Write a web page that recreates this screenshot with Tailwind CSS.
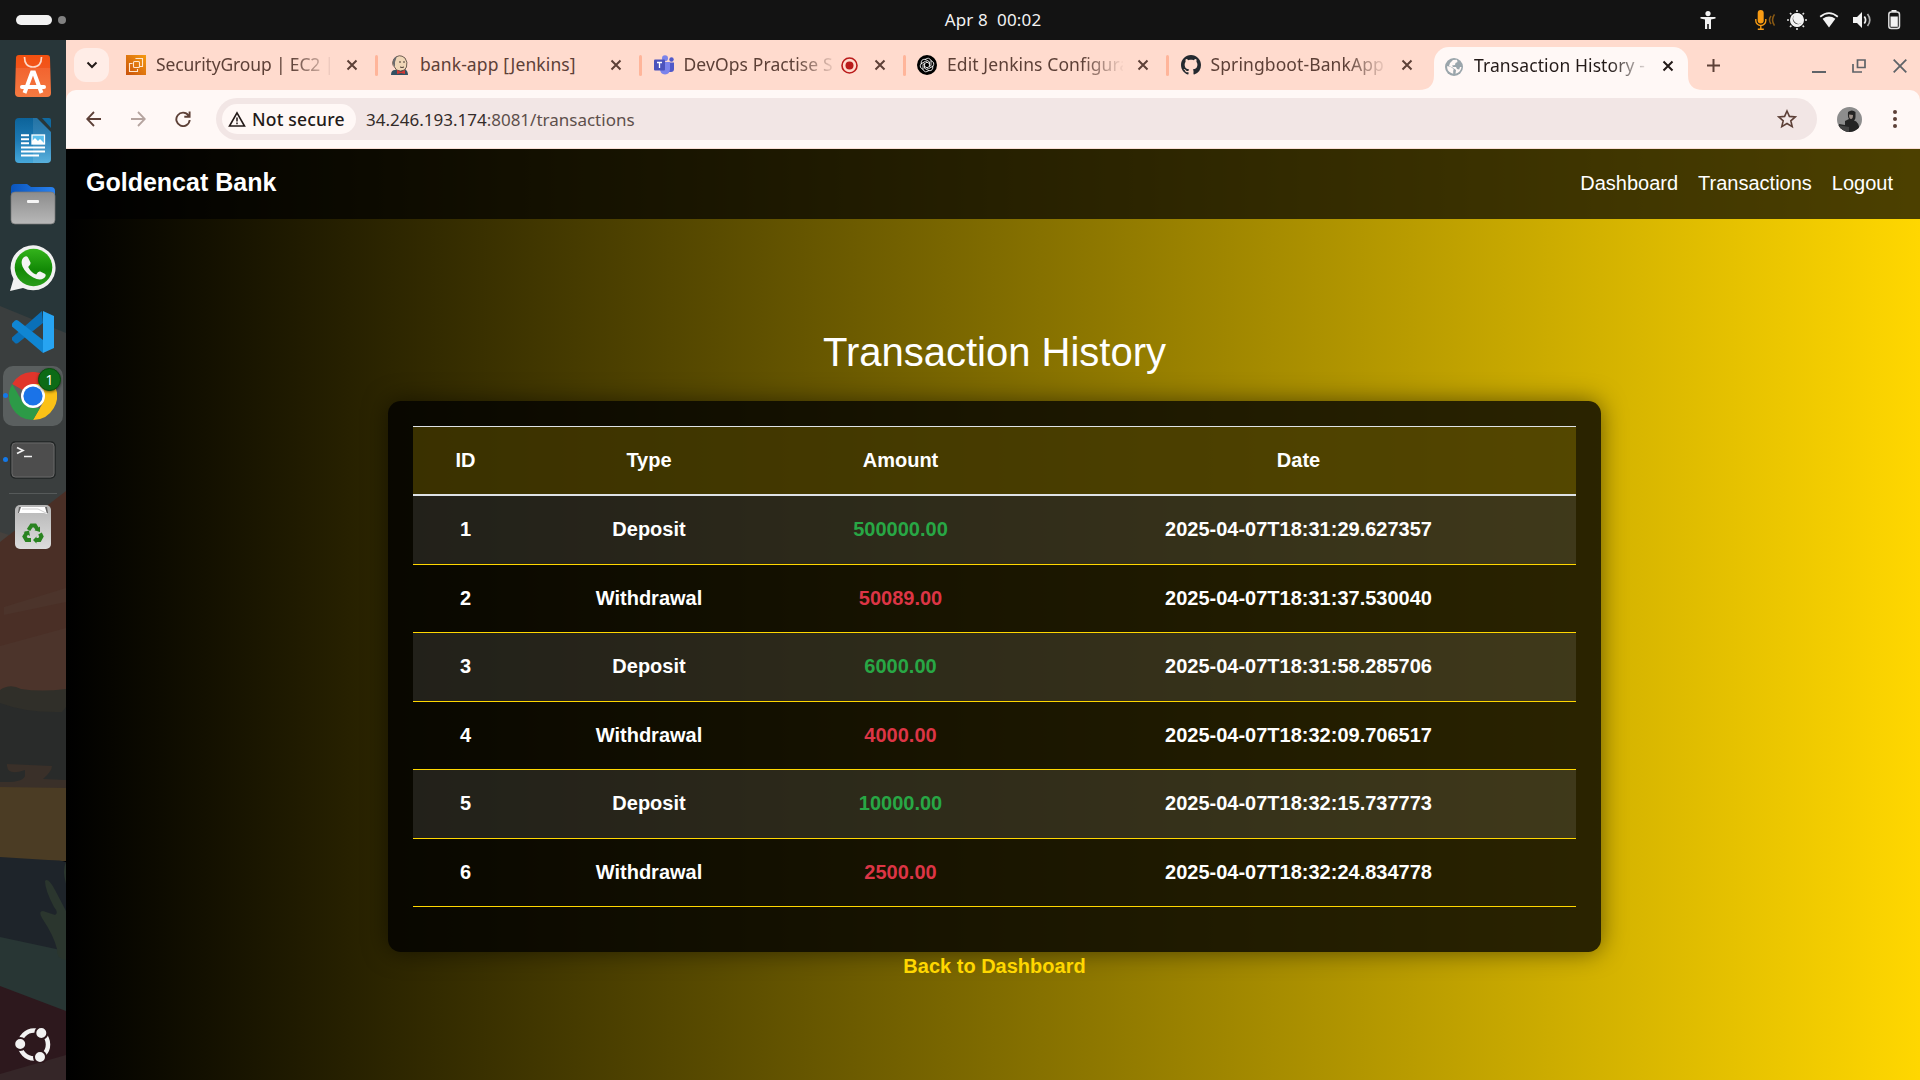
<!DOCTYPE html>
<html lang="en">
<head>
<meta charset="utf-8">
<title>Transaction History - Goldencat Bank</title>
<script src="https://cdn.jsdelivr.net/npm/@tailwindcss/browser@4"></script>
</head>
<body class="w-[1920px] h-[1080px] overflow-hidden flex flex-col bg-black font-['Noto_Sans',sans-serif]">

<!-- System top bar -->
<header class="h-10 shrink-0 bg-[#131313] grid grid-cols-[1fr_auto_1fr] items-center text-[#f2f2f2]">
  <div class="flex items-center gap-1.5 pl-4">
    <span class="w-9 h-2.5 rounded-full bg-[#f2f2f2]"></span>
    <span class="size-2 rounded-full bg-[#828282]"></span>
  </div>
  <div class="text-[17px] tracking-[0.15px] leading-10 whitespace-pre translate-x-[33px] -mt-px">Apr 8  00:02</div>
  <div class="flex items-center justify-end pr-[18px]">
    <svg class="w-4 h-[18px] mr-[39px]" viewBox="0 0 16 18" fill="#f2f2f2"><circle cx="8" cy="2.6" r="2.6"/><path d="M.5 6h15v1.6L11 8.6V18H8.8v-5H7.2v5H5V8.600L.5 7.600z"/></svg>
    <svg class="w-5 h-5 mr-3" viewBox="0 0 20 20" fill="none"><rect x="2.700" y="0" width="6" height="13.500" rx="3" fill="#f89b13"/><path d="M.8 9v1.500a5 5 0 0 0 10 0V9M5.800 15.500V19M2.800 19.300h6" stroke="#f89b13" stroke-width="1.400"/><path d="M16 6q-3 4 0 8M19.500 4.500q-4 5.500 0 11" stroke="#8a5a14" stroke-width="1.500"/></svg>
    <svg class="w-5 h-5 mr-3" viewBox="0 0 20 20"><circle cx="10" cy="10" r="6.700" fill="#f2f2f2"/><path d="M8.500 5.200a4.900 4.900 0 0 0 6.300 6.500" fill="none" stroke="#131313" stroke-width="1.300" transform="rotate(180 10 10) translate(-1 -1)" opacity="0"/><path d="M7.200 5a5.500 5.500 0 1 0 8 7.600A5.600 5.600 0 0 1 7.200 5z" fill="#131313" opacity=".85"/><path d="M10 0v2M10 18v2M0 10h2M18 10h2M3 3l1.400 1.400M15.600 15.600L17 17M17 3l-1.400 1.400M4.400 15.600L3 17" stroke="#ddd" stroke-width="1.600"/><circle cx="10" cy="10" r="6.300" fill="none" stroke="#f2f2f2" stroke-width="1.200"/></svg>
    <svg class="w-5 h-4 mr-[13px]" viewBox="0 0 20 16"><path d="M1.200 4.700Q10-2.500 18.800 4.700" fill="none" stroke="#f2f2f2" stroke-width="1.800"/><path d="M3.600 6.800q6.400-4.600 12.800 0L10 15.500z" fill="#f2f2f2"/></svg>
    <svg class="w-5 h-[18px] mr-[14px]" viewBox="0 0 20 18"><path d="M1 6h4l5-5v16l-5-5H1z" fill="#f2f2f2"/><path d="M12.300 5.500q2.600 3.500 0 7" fill="none" stroke="#f2f2f2" stroke-width="1.700"/><path d="M15.500 3q4.600 6 0 12" fill="none" stroke="#aaa" stroke-width="1.700"/></svg>
    <svg class="w-4 h-5" viewBox="0 0 16 20"><path d="M5.500 0h5v2h-5z" fill="#f2f2f2"/><rect x="2.800" y="2" width="10.700" height="16.500" rx="2.500" fill="none" stroke="#ddd" stroke-width="1.500"/><path d="M4.500 6.500h7.300v10.300H4.500z" fill="#f2f2f2"/></svg>
  </div>
</header>

<div class="flex flex-1 min-h-0">

<!-- Dock -->
<aside class="relative w-[66px] shrink-0 flex flex-col items-center pt-1 pb-[13px]">
  <svg class="absolute inset-0 w-[66px] h-[1040px]" viewBox="0 40 66 1040" preserveAspectRatio="none">
    <path fill="#283639" d="M0 40h66v300H0z"/>
    <path fill="#3a3e3e" d="M0 306l66 27v215H0z"/>
    <path fill="#46413d" d="M0 532l9 3-9 8z"/>
    <path fill="#4a2f26" d="M66 491v250H0V542z"/>
    <path fill="#4c342b" d="M4 607l62-19v14L4 615zM0 646l66-18v70H0z"/>
    <path fill="#302f29" d="M0 690q10-7 21-1 20 3 45 0v40H0z"/>
    <path fill="#292b2a" d="M0 703q26 10 62 9l4-5v85H0z"/>
    <path fill="#3a3029" d="M7 764l45 2q0 5-9 13l23 1v10H0v-8q25 1 25-7v-5q-17 6-18-4z"/>
    <path fill="#4b3c24" d="M0 787l66 1v73H0z"/>
    <path fill="#1e242a" d="M0 857l48 3q14 0 18 2v100H0z"/>
    <path fill="#283634" d="M0 937l56 12 10 3v65H0z"/>
    <path fill="#2b362e" d="M45 881q3-4 10 9l11 21v49q-10-1-9-11-3-13-15-31-4-7 1-7l12 4q4-2-1-8-9-17-9-26zM66 862q-4 8 0 22z"/>
    <path fill="#2d181d" d="M0 986l66 25v69H0z"/>
    <path fill="#352628" d="M0 1074l66-19v25H0z"/>
  </svg>
  <div class="relative flex flex-col items-center w-full flex-1">
    <!-- App Center -->
    <div class="h-16 flex items-center"><svg class="w-9 h-[42px]" viewBox="0 0 36 42"><defs><linearGradient id="ac" x1="0" y1="0" x2="0" y2="1"><stop offset="0" stop-color="#f2500f"/><stop offset=".3" stop-color="#f2551c"/><stop offset=".31" stop-color="#f26430"/><stop offset="1" stop-color="#f57a41"/></linearGradient></defs><path fill="url(#ac)" d="M4 0h28q3 0 3 3l1 35q0 4-4 4H4q-4 0-4-4L1 3q0-3 3-3z"/><path d="M9.500 2q0 10 8.500 10t8.500-10" fill="none" stroke="#fdd9c8" stroke-width="1.700"/><path d="M9.500 38L17 17.500h2L26.500 38" fill="none" stroke="#fff" stroke-width="4"/><path d="M7 32h22" stroke="#fff" stroke-width="4" stroke-linecap="round"/></svg></div>
    <!-- Writer -->
    <div class="h-16 flex items-center"><svg class="w-9 h-[45px]" viewBox="0 0 36 45"><defs><linearGradient id="wr" x1="0" y1="0" x2="0" y2="1"><stop offset="0" stop-color="#0c639a"/><stop offset=".5" stop-color="#1d7ab4"/><stop offset="1" stop-color="#46a8da"/></linearGradient></defs><path fill="url(#wr)" d="M4 0h18l14 14v27q0 4-4 4H4q-4 0-4-4V4q0-4 4-4z"/><path fill="#fff" fill-opacity=".1" d="M18 0h4l14 14v27q0 4-4 4H18z"/><path fill="#11699f" d="M27 0h7q2 0 2 2v8z"/><path d="M6 17.300h8M6 21.300h8M6 25.300h8M6 29.500h24M6 33.500h24M6 37.500h18" stroke="#fff" stroke-width="1.900"/><rect x="17" y="17" width="12.500" height="9" fill="#5cc0ee" stroke="#fff" stroke-width="1.300"/><path fill="#fff" d="M17 26v-3l3-3 3 3 2-2 4 4v1z"/></svg></div>
    <!-- Files -->
    <div class="h-16 flex items-center"><svg class="w-[46px] h-[42px]" viewBox="0 0 46 42"><defs><linearGradient id="fl" x1="0" y1="0" x2="0" y2="1"><stop offset="0" stop-color="#8c8c8c"/><stop offset="1" stop-color="#b8b8b8"/></linearGradient><linearGradient id="fb"><stop offset="0" stop-color="#0a55bd"/><stop offset="1" stop-color="#2a82ee"/></linearGradient></defs><path fill="url(#fb)" d="M5 1h12l4 3h20q4 0 4 4v12H1V5q0-4 4-4z"/><rect x="1" y="9" width="44" height="32" rx="4" fill="url(#fl)" stroke="#777" stroke-width=".7"/><rect x="17" y="17" width="12" height="3" rx="1" fill="#f5f5f5"/></svg></div>
    <!-- WhatsApp -->
    <div class="h-16 flex items-center"><svg class="w-[46px] h-[46px]" viewBox="0 0 46 46"><defs><linearGradient id="wa" x1="0" y1="0" x2="0" y2="1"><stop offset="0" stop-color="#34b31c"/><stop offset=".55" stop-color="#138a06"/><stop offset="1" stop-color="#2a9c1b"/></linearGradient></defs><path fill="#f1f1f1" d="M0 46l3.500-12A22.500 22.500 0 1 1 13 43z"/><circle cx="23.500" cy="22.500" r="18.800" fill="url(#wa)"/><path fill="#f4f4f4" d="M13 13q3-3 5-.5l2.500 5q.5 1.500-2.300 4.500 3 5.800 8 7.500 2-3.500 4-3l5 2.500q1.500 2-1.500 4.300-4 2.800-10.500-.8-7.500-4-10.700-11-2-5 .5-8.500z"/></svg></div>
    <!-- VS Code -->
    <div class="h-16 flex items-center"><svg class="w-[42px] h-[42px]" viewBox="0 0 42 42"><path fill="#0a70b8" d="M0 26.500L30 0l1 12L6 32q-2 1-3 0l-3-3z"/><path fill="#1086d3" d="M0 15.500v-3l3-3q1.500-1 3 0L31 29v13z"/><path fill="#27a4f2" d="M31 0l11 5v32l-11 5z"/></svg></div>
    <!-- Chrome -->
    <div class="h-16 w-full flex items-center justify-center relative">
      <span class="absolute left-[3px] top-0.5 size-[60px] rounded-[10px] bg-[#5a5f5f]"></span>
      <svg class="relative w-12 h-12" viewBox="0 0 48 48"><path fill="#e0352b" d="M24 24L3.200 12A24 24 0 0 1 44.800 12z"/><path fill="#fbc116" d="M24 12h20.800A24 24 0 0 1 24 48l10.400-18z"/><path fill="#2c9a47" d="M3.200 12l10.400 18L24 36h7L24 48A24 24 0 0 1 3.200 12z"/><circle cx="24" cy="24" r="12" fill="#fff"/><circle cx="24" cy="24" r="9.600" fill="#1a73e8"/></svg>
      <span class="absolute left-[38px] top-[4px] size-[23px] rounded-full bg-[#0c6b16] border border-[#084d0e] text-white text-[14px] leading-[22px] text-center shadow-[0_1px_3px_rgba(0,0,0,0.5)]">1</span>
      <span class="absolute left-[3px] top-[29px] size-[5px] rounded-full bg-[#1379e8]"></span>
    </div>
    <!-- Terminal -->
    <div class="h-16 w-full flex items-center justify-center relative">
      <svg class="w-[46px] h-[38px]" viewBox="0 0 46 38"><rect x="1" y="1" width="44" height="36" rx="4" fill="#4d4d4d" stroke="#202424" stroke-width="1.500"/><rect x="2" y="2" width="42" height="34" rx="3.500" fill="none" stroke="#686868"/><path d="M7 6.500l6 3-6 3M14 15.500h8" fill="none" stroke="#f2f2f2" stroke-width="1.700"/></svg>
      <span class="absolute left-[3px] top-[29px] size-[5px] rounded-full bg-[#1379e8]"></span>
    </div>
    <div class="w-12 h-px bg-[#565a5a] mt-px"></div>
    <!-- Trash -->
    <div class="h-16 flex items-center"><svg class="w-[38px] h-[46px] mt-0.5" viewBox="0 0 38 46"><defs><linearGradient id="tr" x1="0" y1="0" x2="0" y2="1"><stop offset="0" stop-color="#b5b5b5"/><stop offset="1" stop-color="#dcdcdc"/></linearGradient></defs><rect x="1" y="1" width="36" height="44" rx="5" fill="url(#tr)"/><path fill="#666" d="M5 3h28l1 6H4z"/><path fill="#fff" d="M7 3h24l2 7-3-1H5z"/><path d="M8 5h16l8 4" stroke="#bbb" fill="none" stroke-width=".7"/><g fill="none" stroke="#298320" stroke-width="4"><path d="M14.500 26l3-4.500h3.500l2.500 4"/><path d="M26 29.500l1.500 3-2 3.500h-4"/><path d="M17 36h-4.500l-2-3.500 2.500-4"/></g><path fill="#298320" d="M26 22.500v5.500l-5.500-1.800zM22.500 32.500v7l-3.500-3.500zM9.500 28l5.500-1.500 1 5.500z"/></svg></div>
    <!-- Ubuntu -->
    <div class="mt-auto mb-1"><svg class="w-9 h-9" viewBox="0 0 36 36"><circle cx="19" cy="17.500" r="14" fill="none" stroke="#f2f2f2" stroke-width="4.500"/><g fill="#f2f2f2" stroke="#2d181d" stroke-width="2"><circle cx="5.200" cy="17" r="6"/><circle cx="26.300" cy="6" r="6"/><circle cx="25" cy="30" r="6"/></g></svg></div>
  </div>
</aside>

<!-- Browser window -->
<section class="flex-1 min-w-0 flex flex-col">

  <!-- Tab strip -->
  <div class="h-[50px] shrink-0 bg-[#ffdbce] flex items-center text-[17.500px] tracking-[0.1px] text-[#5d4037]">
    <button class="ml-2 -mt-px w-[35px] h-[34px] rounded-xl bg-[#ffede7] flex items-center justify-center"><svg class="w-3 h-3" viewBox="0 0 12 12"><path d="M1.500 3.500L6 8l4.500-4.500" fill="none" stroke="#231a18" stroke-width="2"/></svg></button>

    <div class="ml-[3px] w-[264px] shrink-0 h-full flex items-center pl-[14px] [&>*]:shrink-0">
      <svg class="size-5" viewBox="0 0 20 20"><defs><linearGradient id="ec" x1="0" y1="1" x2="1" y2="0"><stop offset="0" stop-color="#c9520c"/><stop offset="1" stop-color="#f59b12"/></linearGradient></defs><path fill="url(#ec)" d="M0 0h20v20H0z"/><g fill="none" stroke="#ffe6cf" stroke-width="1.100"><rect x="7.500" y="6.500" width="6" height="6" rx="1"/><path d="M10 4V3.500h6.500v8H14M6.500 8.500h-3v8h8V14"/></g></svg>
      <span class="ml-2.5 -mt-0.5 w-[185px] tracking-[-0.15px] whitespace-nowrap overflow-hidden [mask-image:linear-gradient(to_right,#000_135px,transparent_178px)]">SecurityGroup | EC2 |</span>
      <svg class="ml-[5px] size-3" viewBox="0 0 12 12"><path d="M1.500 1.500l9 9m0-9l-9 9" stroke="#5d4037" stroke-width="2"/></svg>
      <span class="ml-[17px] w-[3px] h-[21px] rounded bg-[#ffb59a]"></span>
    </div>
    <div class="w-[263.500px] shrink-0 h-full flex items-center pl-[14px] [&>*]:shrink-0">
      <svg class="size-5" viewBox="0 0 20 20"><path fill="#335061" d="M1 20q0-5 4-5l10-1q3 2 3 6z"/><path fill="#f0d6b7" stroke="#4b3d35" stroke-width=".8" d="M4 4q5-6 11-1 3 4 1.500 9-1 4-6 4T4.500 12Q1 9 4 4z"/><path fill="#6d6b6d" d="M3 9Q2 3 7 1l-2 6v5z"/><path d="M9 7h2m2 0h2M10 12q2 1 4 0" stroke="#4b3d35" fill="none"/><path fill="#d33833" d="M7 15l4 2 4-2v4l-4-1-4 1z"/></svg>
      <span class="ml-2.5 -mt-0.5 w-[185px] whitespace-nowrap overflow-hidden">bank-app [Jenkins]</span>
      <svg class="ml-[5px] size-3" viewBox="0 0 12 12"><path d="M1.500 1.500l9 9m0-9l-9 9" stroke="#5d4037" stroke-width="2"/></svg>
      <span class="ml-[17px] w-[3px] h-[21px] rounded bg-[#ffb59a]"></span>
    </div>
    <div class="w-[263.500px] shrink-0 h-full flex items-center pl-[14px] [&>*]:shrink-0">
      <svg class="size-5" viewBox="0 0 20 20"><circle cx="11" cy="3.200" r="3" fill="#7b83eb"/><circle cx="17.500" cy="4.500" r="2.200" fill="#5059c9"/><path fill="#5059c9" d="M14 7.500h6V14q0 3-3 3h-3z"/><path fill="#7b83eb" d="M6 7h10v7q0 5-5 5.500-5-.5-5-5.500z"/><rect y="4.500" width="11" height="11" rx="1" fill="#4b53bc"/><path d="M3 7.500h5M5.500 7.500v5.500" stroke="#fff" stroke-width="1.300"/></svg>
      <span class="ml-2.5 -mt-0.5 w-[151px] whitespace-nowrap overflow-hidden [mask-image:linear-gradient(to_right,#000_112px,transparent_154px)]">DevOps Practise S</span>
      <svg class="ml-[6px] size-[17px]" viewBox="0 0 17 17"><circle cx="8.500" cy="8.500" r="7.500" fill="none" stroke="#ba1b1b" stroke-width="1.600"/><circle cx="8.500" cy="8.500" r="4" fill="#ba1b1b"/></svg>
      <svg class="ml-4 size-3" viewBox="0 0 12 12"><path d="M1.500 1.500l9 9m0-9l-9 9" stroke="#5d4037" stroke-width="2"/></svg>
      <span class="ml-[17px] w-[3px] h-[21px] rounded bg-[#ffb59a]"></span>
    </div>
    <div class="w-[263.500px] shrink-0 h-full flex items-center pl-[14px] [&>*]:shrink-0">
      <svg class="size-5" viewBox="0 0 20 20"><circle cx="10" cy="10" r="10"/><g fill="none" stroke="#fff" stroke-width=".8"><path d="M8 4.500q4-3 6 1v5l-4 2.300"/><path d="M8 4.500q4-3 6 1v5l-4 2.300" transform="rotate(60 10 10)"/><path d="M8 4.500q4-3 6 1v5l-4 2.300" transform="rotate(120 10 10)"/><path d="M8 4.500q4-3 6 1v5l-4 2.300" transform="rotate(180 10 10)"/><path d="M8 4.500q4-3 6 1v5l-4 2.300" transform="rotate(240 10 10)"/><path d="M8 4.500q4-3 6 1v5l-4 2.300" transform="rotate(300 10 10)"/></g></svg>
      <span class="ml-2.5 -mt-0.5 w-[176px] mr-[9px] whitespace-nowrap overflow-hidden [mask-image:linear-gradient(to_right,#000_135px,transparent_178px)]">Edit Jenkins Configura</span>
      <svg class="ml-[5px] size-3" viewBox="0 0 12 12"><path d="M1.500 1.500l9 9m0-9l-9 9" stroke="#5d4037" stroke-width="2"/></svg>
      <span class="ml-[17px] w-[3px] h-[21px] rounded bg-[#ffb59a]"></span>
    </div>
    <div class="w-[263.500px] shrink-0 h-full flex items-center pl-[14px] [&>*]:shrink-0">
      <svg class="size-5" viewBox="0 0 16 16"><path fill="#24292f" d="M8 0C3.580 0 0 3.580 0 8c0 3.540 2.290 6.530 5.470 7.590.4.070.55-.17.55-.38 0-.19-.01-.82-.01-1.490-2.010.37-2.530-.49-2.690-.94-.09-.23-.48-.94-.82-1.130-.28-.15-.68-.52-.01-.53.63-.01 1.080.58 1.230.82.72 1.210 1.870.87 2.330.66.07-.52.28-.87.51-1.070-1.780-.2-3.640-.89-3.640-3.950 0-.87.31-1.590.82-2.150-.08-.2-.36-1.020.08-2.120 0 0 .67-.21 2.200.82.64-.18 1.320-.27 2-.27s1.360.09 2 .27c1.530-1.040 2.200-.82 2.200-.82.44 1.100.16 1.920.08 2.120.51.56.82 1.270.82 2.150 0 3.070-1.870 3.750-3.650 3.950.29.25.54.73.54 1.480 0 1.070-.01 1.930-.01 2.200 0 .21.15.46.55.38A8.010 8.010 0 0 0 16 8c0-4.420-3.580-8-8-8z"/></svg>
      <span class="ml-2.5 -mt-0.5 w-[185px] whitespace-nowrap overflow-hidden [mask-image:linear-gradient(to_right,#000_135px,transparent_178px)]">Springboot-BankApp</span>
      <svg class="ml-[5px] size-3" viewBox="0 0 12 12"><path d="M1.500 1.500l9 9m0-9l-9 9" stroke="#5d4037" stroke-width="2"/></svg>
    </div>
    <!-- Active tab -->
    <div class="relative ml-[4px] w-[254px] shrink-0 h-[43px] self-end flex items-center pl-[11px] pb-1 rounded-t-[15px] bg-[#fff8f6] text-[#231a18]">
      <svg class="absolute -left-[15px] bottom-0 size-[15px]" viewBox="0 0 15 15"><path fill="#fff8f6" d="M15 0v15H0Q15 15 15 0z"/></svg>
      <svg class="absolute -right-[15px] bottom-0 size-[15px]" viewBox="0 0 15 15"><path fill="#fff8f6" d="M0 0v15h15Q0 15 0 0z"/></svg>
      <svg class="size-[18px] shrink-0" viewBox="0 0 18 18"><circle cx="9" cy="9" r="9" fill="#9aa5ab"/><path fill="#fff8f6" d="M2.200 8l3.500 1 3 2-.5 2v2.800l-2-.8Q1.500 13 2.200 8zM8 2l4-.2.500 2.200-2 1-.5 2-3 .5 1 1.500h3l1 2 2.200.5.8-2.500h1.500Q16 14 10.500 15.700L11 12 7.500 9.500 4 8l1-3z" fill-rule="evenodd"/></svg>
      <span class="ml-[11px] -mt-[3px] w-[176px] whitespace-nowrap overflow-hidden [mask-image:linear-gradient(to_right,#000_135px,transparent_178px)]">Transaction History -</span>
      <svg class="ml-[12px] -mt-px size-3 shrink-0" viewBox="0 0 12 12"><path d="M1.500 1.500l9 9m0-9l-9 9" stroke="#231a18" stroke-width="2"/></svg>
    </div>
    <svg class="ml-[18px] size-[15px]" viewBox="0 0 15 15"><path d="M7.500 1v13M1 7.500h13" stroke="#5d4037" stroke-width="2"/></svg>
    <div class="ml-auto flex items-center pr-[13px] pt-px">
      <svg class="w-[14px] h-[14px] mr-[26px]" viewBox="0 0 14 14"><path d="M0 13h14" stroke="#5f6368" stroke-width="2"/></svg>
      <svg class="w-[14px] h-[14px] mr-[27px]" viewBox="0 0 14 14"><path d="M5.500 1H13v7.500H5.500zM1 5v8h9" fill="none" stroke="#5f6368" stroke-width="1.700"/></svg>
      <svg class="w-[14px] h-[14px]" viewBox="0 0 14 14"><path d="M.7.700l12.600 12.600m0-12.600L.7 13.300" stroke="#5f6368" stroke-width="1.800"/></svg>
    </div>
  </div>

  <!-- Toolbar -->
  <div class="bg-[#ffdbce] shrink-0">
  <div class="h-[59px] rounded-t-[10px] bg-[#fff8f6] border-b border-[#f8ddd4] flex items-center">
    <svg class="ml-5 size-4" viewBox="0 0 16 16"><path d="M15 8H1.500M8 1L1.200 8 8 15" fill="none" stroke="#5d4037" stroke-width="1.800"/></svg>
    <svg class="ml-[28px] size-4" viewBox="0 0 16 16"><path d="M1 8h13.500M8 1l6.800 7L8 15" fill="none" stroke="#b5a49f" stroke-width="1.800"/></svg>
    <svg class="ml-[29px] size-4" viewBox="0 0 16 16"><path d="M13.500 4.500A6.700 6.700 0 1 0 14.700 9M14.600.5v5.300H9.300" fill="none" stroke="#5d4037" stroke-width="1.900"/></svg>
    <div class="ml-[25px] w-[1601px] h-[42px] rounded-full bg-[#f2e6e5] flex items-center pl-1.5">
      <div class="w-[134px] h-[30px] rounded-full bg-[#fff8f6] flex items-center pl-1.5 text-[#231a18]">
        <svg class="w-[18px] h-4" viewBox="0 0 18 16"><path d="M9 1.800L16.500 15h-15z" fill="none" stroke="#231a18" stroke-width="1.600"/><path d="M9 6.500v4M9 11.500v1.700" stroke="#231a18" stroke-width="1.500"/></svg>
        <span class="ml-1.5 font-medium text-[17.500px] tracking-[0.2px] whitespace-nowrap">Not secure</span>
      </div>
      <span class="ml-[10px] mt-px text-[17px] text-[#5d4f4b]"><span class="text-[#332b29]">34.246.193.174</span>:8081/transactions</span>
      <svg class="ml-auto mr-5 size-5" viewBox="0 0 20 20"><path d="M10 2l2.400 5.400 5.900.5-4.500 3.900 1.400 5.800L10 14.500l-5.200 3.100 1.400-5.800-4.500-3.900 5.900-.5z" fill="none" stroke="#5d4037" stroke-width="1.600"/></svg>
    </div>
    <svg class="ml-5 size-[25px]" viewBox="0 0 25 25"><defs><clipPath id="av"><circle cx="12.500" cy="12.500" r="12.500"/></clipPath></defs><g clip-path="url(#av)"><path fill="#8d8d8d" d="M0 0h25v25H0z"/><path fill="#242424" d="M11 5q4-3 7.500 0v5q0 3-1.500 3.500 5 1 5.500 10L18 25H8l-6-4v-4l6 1 0-4 4-2q-1.500-2-1-7z"/><path fill="#9b8f88" d="M12 7.500l4 .5q0 4-2 4t-2-4.500z"/><path fill="#444" d="M0 18l12 2v5H0z"/></g></svg>
    <svg class="ml-[30px] w-[6px] h-5" viewBox="0 0 6 20" fill="#5d4037"><circle cx="3" cy="3" r="2"/><circle cx="3" cy="10" r="2"/><circle cx="3" cy="17" r="2"/></svg>
  </div>
  </div>

  <!-- Page -->
  <main class="flex-1 flex flex-col bg-[linear-gradient(to_right,#000,#ffd700)] font-['Liberation_Sans',Arial,sans-serif] text-xl text-white">
    <nav class="w-full h-[70px] shrink-0 bg-black/70 flex items-center justify-between pl-5 pr-[27px]">
      <a class="text-[25px] font-bold -mt-1">Goldencat Bank</a>
      <div class="flex gap-5 -mt-[3px]"><a>Dashboard</a><a>Transactions</a><a>Logout</a></div>
    </nav>
    <div class="flex flex-col items-center pl-[3px]">
    <h2 class="mt-[109px] text-[40px] leading-[48px]">Transaction History</h2>
    <div class="mt-[25px] w-[1213px] h-[551px] shrink-0 rounded-[12.500px] bg-black/80 p-[25px] shadow-[0_0_25px_rgba(0,0,0,0.5)]">
      <div class="text-center font-bold [&>div]:grid [&>div]:grid-cols-[105px_262px_241px_555px] [&>div]:items-center [&>div]:pb-0.5">
        <div class="h-[70px] border-t border-b-2 border-[#dee2e6] bg-[#ffd700]/20"><span>ID</span><span>Type</span><span>Amount</span><span>Date</span></div>
        <div class="h-[69px] border-b border-[#ffd700] bg-white/10"><span>1</span><span>Deposit</span><span class="text-[#28a745]">500000.00</span><span>2025-04-07T18:31:29.627357</span></div>
        <div class="h-[68px] border-b border-[#ffd700]"><span>2</span><span>Withdrawal</span><span class="text-[#dc3545]">50089.00</span><span>2025-04-07T18:31:37.530040</span></div>
        <div class="h-[69px] border-b border-[#ffd700] bg-white/10"><span>3</span><span>Deposit</span><span class="text-[#28a745]">6000.00</span><span>2025-04-07T18:31:58.285706</span></div>
        <div class="h-[68px] border-b border-[#ffd700]"><span>4</span><span>Withdrawal</span><span class="text-[#dc3545]">4000.00</span><span>2025-04-07T18:32:09.706517</span></div>
        <div class="h-[69px] border-b border-[#ffd700] bg-white/10"><span>5</span><span>Deposit</span><span class="text-[#28a745]">10000.00</span><span>2025-04-07T18:32:15.737773</span></div>
        <div class="h-[68px] border-b border-[#ffd700]"><span>6</span><span>Withdrawal</span><span class="text-[#dc3545]">2500.00</span><span>2025-04-07T18:32:24.834778</span></div>
      </div>
    </div>
    <a class="leading-[28px] font-bold text-[#ffd700]">Back to Dashboard</a>
    </div>
  </main>
</section>
</div>
</body>
</html>
